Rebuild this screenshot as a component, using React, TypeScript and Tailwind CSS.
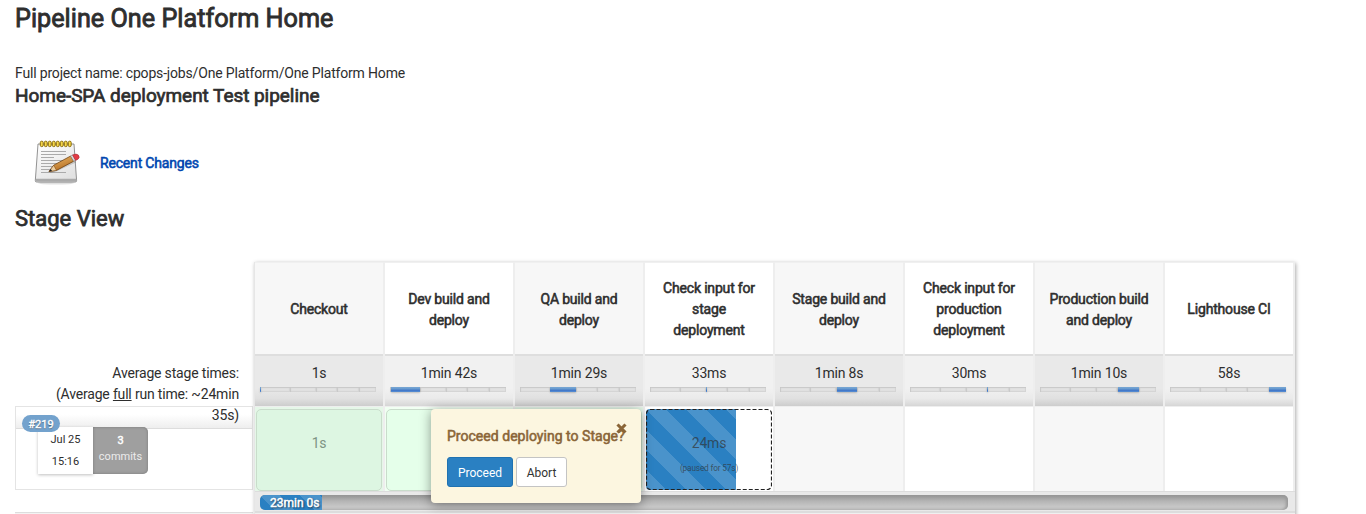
import React from "react";

type Stage = { name: string; time: string; from: number; to: number };

const stages: Stage[] = [
  { name: "Checkout", time: "1s", from: 0, to: 1 },
  { name: "Dev build and deploy", time: "1min 42s", from: 0.5, to: 30 },
  { name: "QA build and deploy", time: "1min 29s", from: 30, to: 56 },
  { name: "Check input for stage deployment", time: "33ms", from: 56, to: 57 },
  { name: "Stage build and deploy", time: "1min 8s", from: 57, to: 77 },
  { name: "Check input for production deployment", time: "30ms", from: 77, to: 78 },
  { name: "Production build and deploy", time: "1min 10s", from: 78, to: 99 },
  { name: "Lighthouse CI", time: "58s", from: 99, to: 116 },
];

const segments = [30, 26, 21, 22, 17];

function Notepad() {
  return (
    <svg width="48" height="48" viewBox="0 0 48 48" className="shrink-0">
      <defs>
        <linearGradient id="paper" x1="0" y1="0" x2="0.6" y2="1">
          <stop offset="0" stopColor="#fff" />
          <stop offset="1" stopColor="#e2e2e2" />
        </linearGradient>
        <linearGradient id="wood" x1="0" y1="0" x2="0.5" y2="1">
          <stop offset="0" stopColor="#f0bd6d" />
          <stop offset="1" stopColor="#b36c20" />
        </linearGradient>
      </defs>
      <ellipse cx="23" cy="44" rx="18" ry="1.6" fill="#000" opacity=".12" />
      <path d="M5 5h36l2.6 36.5q0 1.5-1.5 1.5H3.7Q2.2 43 2.3 41.5z" fill="url(#paper)" stroke="#777" strokeWidth=".8" />
      <path d="M2.8 39.8h40.6l.1 2.7H2.8z" fill="#aaa" />
      <path d="M8 12.5h25M8 15.5h25M8 18.5h13M8 21.5h25M8 24.5h20M8 27.5h15M8 30.5h9M8 33.5h25" stroke="#aaa" strokeWidth="1" />
      {[7, 11, 15, 19, 23, 27, 31, 35].map((x) => (
        <rect key={x} x={x + 0.3} y="2.2" width="2.9" height="5.4" rx="1.3" fill="#f5d64a" stroke="#806200" strokeWidth=".9" />
      ))}
      <path d="M16 34l6-1 21-9.5-1-4z" fill="#000" opacity=".15" />
      <path d="M16 32.5l4.7-6.3L37.7 17l3 5.2-17.2 9.2z" fill="url(#wood)" stroke="#704313" strokeWidth=".8" />
      <path d="M16 32.5l4.7-6.3 2.8 5.2z" fill="#edce9f" stroke="#704313" strokeWidth=".5" />
      <path d="M16 32.5l1.8-2.4 1.2 1.8z" fill="#222" />
      <path d="M37.5 17.1l2.2-1.2 3.1 5.2-2.2 1.1z" fill="#d7d7d7" stroke="#777" strokeWidth=".5" />
      <path d="M39.6 15.9q3.8-1.7 5.8.2 1.8 2.6-.4 4.1l-2.4 1.2z" fill="#e43b45" stroke="#a42d35" strokeWidth=".6" />
    </svg>
  );
}

function StageBar({ from, to }: { from: number; to: number }) {
  return (
    <div className="relative ml-[5px] flex h-[5px] w-[116px]">
      {segments.map((w, i) => (
        <div
          key={i}
          className="h-[5px] bg-[#e2e2e2] shadow-[inset_1px_1px_1px_#c8c8c8,inset_-1px_-1px_1px_#d4d4d4]"
          style={{ width: w }}
        />
      ))}
      <div
        className="absolute top-0 h-[5px] bg-[linear-gradient(#78a7d4,#6497cd_45%,#3b71c6_60%,#5b91d3)] shadow-[0_1px_2px_rgba(0,0,0,0.2)]"
        style={{ left: from, width: to - from }}
      />
    </div>
  );
}

function StageCell({ index }: { index: number }) {
  if (index < 3) {
    return (
      <div className={`h-[84px] pt-[2px] pl-px ${index % 2 ? "bg-[#f0fff2]" : "bg-[#e5f7e8]"}`}>
        <div
          className={`flex h-[82px] w-[126px] justify-center rounded-[5px] border border-[#c9dccb] pt-[23px] text-[#7e9483] ${
            index % 2 ? "bg-[#e5ffea]" : "bg-[#ddf6e2]"
          }`}
        >
          {index === 0 ? "1s" : ""}
        </div>
      </div>
    );
  }
  if (index === 3) {
    return (
      <div className="h-[84px] bg-white pt-[2px] pl-px">
        <div className="relative h-[81px] w-[126px]">
          <div className="h-[81px] w-[90px] rounded-l-[4px] bg-[#2a80c2] bg-[linear-gradient(45deg,rgba(255,255,255,0.15)_25%,transparent_25%,transparent_50%,rgba(255,255,255,0.15)_50%,rgba(255,255,255,0.15)_75%,transparent_75%)] bg-[length:40px_40px]" />
          <svg className="absolute inset-0" width="126" height="81">
            <rect x=".5" y=".5" width="125" height="80" rx="4" fill="none" stroke="#222" strokeWidth="1.2" strokeDasharray="4 2" />
          </svg>
          <div className="absolute inset-0 pt-[24px] text-center text-[#333]/70">
            24ms
            <div className="mt-[8px] text-[8.3px] leading-[14px]">(paused for 57s)</div>
          </div>
        </div>
      </div>
    );
  }
  return <div className={`h-[84px] ${index % 2 ? "bg-white" : "bg-[#f7f7f7]"}`} />;
}

function InputPopover() {
  return (
    <div className="absolute top-[147px] left-[176px] h-[94px] w-[210px] rounded-[4px] bg-[#fcf6e0] px-4 pt-[16px] tracking-normal text-[#8a6537] shadow-[0_2px_12px_rgba(0,0,0,0.4)]">
      <div className="text-[14px] leading-[22px] tracking-[0.03px] whitespace-nowrap [-webkit-text-stroke:0.55px_#8a6537]">
        Proceed deploying to Stage?
      </div>
      <svg className="absolute top-[14px] left-[185px]" width="11" height="11" viewBox="0 0 11 11">
        <path d="M1.5 1.5l8 8m0-8l-8 8" stroke="#8a6537" strokeWidth="3.1" />
      </svg>
      <div className="mt-[10px] flex gap-[3px] text-[12px] leading-[30px]">
        <button className="h-[30px] w-[66px] rounded-[3px] border border-[#1f72b1] bg-[#2a80c2] text-white">
          Proceed
        </button>
        <button className="h-[30px] w-[51px] rounded-[3px] border border-[#c4c4c4] bg-white text-[#333]">
          Abort
        </button>
      </div>
    </div>
  );
}

function RunInfo() {
  return (
    <div className="w-[239px] pt-[101px] text-right">
      <div className="relative z-10 h-[43px] pr-[15px] leading-[21px]">
        Average stage times:
        <br />
        (Average <u>full</u> run time: ~24min
        <br />
        35s)
      </div>
      <div className="h-[84px] w-[238px] border border-[#e4e4e4] bg-white tracking-normal">
        <div className="flex h-[22px] items-start border-b border-[#ddd] bg-[linear-gradient(#fff_35%,#eee)] pt-[8px] pl-[6px]">
          <div className="relative z-20 h-[17px] w-[38px] shrink-0 rounded-[9px] bg-[#73a2cd] text-center text-[11px] leading-[19px] text-white [-webkit-text-stroke:0.35px_#fff] [text-shadow:0_1px_1px_#456]">
            #219
          </div>
        </div>
        <div className="relative z-10 -mt-[2px] ml-[22px] flex h-[47px] w-[110px] text-center text-[11px] leading-[22px]">
          <div className="w-[55px] bg-white pt-[2px] shadow-[0_1px_3px_rgba(0,0,0,0.25)]">
            Jul 25
            <br />
            15:16
          </div>
          <div className="w-[55px] rounded-r-[5px] bg-[#9f9f9f] pt-[6px] leading-[16px] text-white shadow-[inset_0_0_3px_#777]">
            <div className="[-webkit-text-stroke:0.45px_#fff]">3</div>
            <span className="opacity-80">commits</span>
          </div>
        </div>
      </div>
      <div className="mt-[22px] h-1 w-[238px] border-t border-[#ddd] bg-[#f3f3f3]" />
    </div>
  );
}

export default function App() {
  return (
    <div className="h-[514px] overflow-hidden bg-white pl-[15px] font-['Roboto',sans-serif] text-[14px] leading-[20px] tracking-[-0.175px] text-[#2e2e2e]">
      <h1 className="h-[63px] pt-[4px] text-[25.2px] leading-[30px] tracking-[0.02px] [-webkit-text-stroke:0.85px_#2e2e2e]">
        Pipeline One Platform Home
      </h1>
      <div className="h-[22px]">Full project name: cpops-jobs/One Platform/One Platform Home</div>
      <h2 className="h-[52px] text-[19px] leading-[21px] tracking-[-0.05px] [-webkit-text-stroke:0.7px_#2e2e2e]">
        Home-SPA deployment Test pipeline
      </h2>
      <div className="flex h-[52px] items-center gap-[19px] pl-[18px]">
        <Notepad />
        <a className="text-[#0047b0] [-webkit-text-stroke:0.55px_#0047b0]">Recent Changes</a>
      </div>
      <h2 className="h-[73px] pt-[16px] text-[22px] leading-[28px] tracking-normal [-webkit-text-stroke:0.75px_#2e2e2e]">
        Stage View
      </h2>
      <div className="flex">
        <RunInfo />
        <div className="relative h-[300px] w-[1041px] border-l border-[#e6e6e6] bg-[#f0f0f0] shadow-[1px_1px_4px_rgba(0,0,0,0.33)]">
          <div className="flex">
            {stages.map((s, i) => (
              <div key={s.name} className="w-[130px] border-r-2 border-[#eee]">
                <div
                  className={`flex h-[92px] items-center justify-center border-t border-[#f0f0f0] px-[12px] pt-[2px] text-center leading-[21px] [-webkit-text-stroke:0.55px_#2e2e2e] ${
                    i % 2 ? "bg-white" : "bg-[#f7f7f7]"
                  }`}
                >
                  {s.name}
                </div>
                <div
                  className={`h-[52px] border-t-2 border-[#dedede] pt-[7px] text-center ${
                    i % 2
                      ? "bg-[linear-gradient(#f1f1f1_65%,#eaeaea_85%,#d6d6d6)]"
                      : "bg-[linear-gradient(#e9e9e9_65%,#e0e0e0_85%,#cdcdcd)]"
                  }`}
                >
                  <div className="h-[24px] leading-[21px]">{s.time}</div>
                  <StageBar from={s.from} to={s.to} />
                </div>
                <div className="h-px bg-[#eee]" />
                <StageCell index={i} />
              </div>
            ))}
          </div>
          <div className="h-[22px] w-[1040px] border-t border-b-2 border-[#ddd] bg-[#e9e9e9] pt-[3px] pl-[5px] tracking-normal">
            <div className="h-[15px] w-[1028px] overflow-hidden rounded-[5px] bg-[linear-gradient(#939393,#b4b4b4_40%,#c6c6c6_75%)] shadow-[inset_-2px_0_3px_#999]">
              <div className="h-[15px] w-[62px] bg-[#2a80c2] bg-[linear-gradient(45deg,rgba(255,255,255,0.15)_25%,transparent_25%,transparent_50%,rgba(255,255,255,0.15)_50%,rgba(255,255,255,0.15)_75%,transparent_75%)] bg-[length:40px_40px] pl-[10px] text-[12px] leading-[17px] whitespace-nowrap text-white [-webkit-text-stroke:0.45px_#fff] [text-shadow:1px_1px_2px_#123]">
                23min 0s
              </div>
            </div>
          </div>
          <InputPopover />
        </div>
      </div>
    </div>
  );
}
